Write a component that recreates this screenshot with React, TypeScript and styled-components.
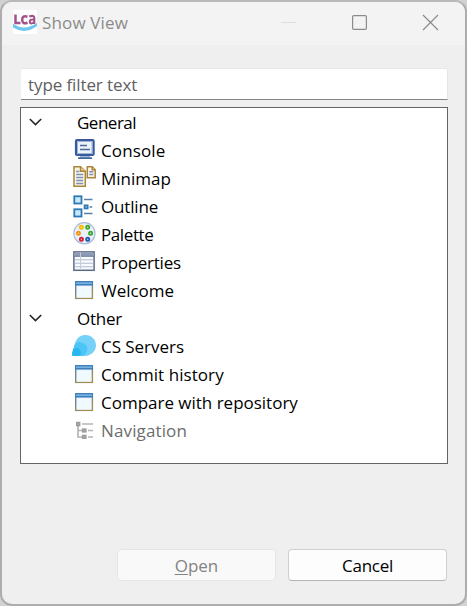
import React from "react";
import styled, { createGlobalStyle } from "styled-components";

const GlobalStyle = createGlobalStyle`
  *, *::before, *::after { box-sizing: border-box; }
  body { margin: 0; background: #d2d2d2; overflow: hidden; }
`;

const Dialog = styled.div`
  width: 467px;
  height: 606px;
  display: flex;
  flex-direction: column;
  border: 2px solid #adadad;
  border-top-color: #b9b9b9;
  border-radius: 12px;
  background: #efefef;
  overflow: hidden;
  font-family: "Open Sans", "Noto Sans", sans-serif;
  font-size: 17px;
  color: #000;
`;

const TitleBar = styled.header`
  height: 43px;
  flex: none;
  display: flex;
  align-items: center;
  padding: 0 26px 3px 11px;
  background: #f3f3f3;
`;

const Title = styled.h1<{ $tracking: number }>`
  flex: 1;
  margin: 0 0 0 5px;
  padding-top: 2px;
  font-size: 17px;
  font-weight: 400;
  line-height: 24px;
  letter-spacing: ${(p) => p.$tracking}px;
  color: #8b8b8b;
`;

const Controls = styled.div`
  display: flex;
  gap: 54px;
`;

const Control = styled.svg`
  width: 17px;
  height: 17px;
  display: block;
`;

const Body = styled.main`
  flex: 1;
  display: flex;
  flex-direction: column;
  padding: 23px 17px 0 18px;
`;

const Filter = styled.input`
  height: 32px;
  flex: none;
  margin-left: 1px;
  padding: 0 7px;
  border: 0;
  border-bottom: 1px solid #858585;
  border-top: 1px solid #e8e8e8;
  border-right: 1px solid #e5e5e5;
  background: #fff;
  border-radius: 2px 2px 0 0;
  outline: none;
  font: inherit;
  letter-spacing: -0.1px;
  &::placeholder { color: #5f5f5f; opacity: 1; }
`;

const Tree = styled.div`
  height: 357px;
  flex: none;
  margin-top: 7px;
  border: 1px solid #646464;
  background: #fff;
`;

const Group = styled.div`
  height: 28px;
  display: grid;
  grid-template-columns: 48px 1fr;
  align-items: center;
  padding-left: 8px;
`;

const Chevron = styled.svg`
  width: 13px;
  height: 8px;
  display: block;
`;

const Item = styled.div<{ $muted?: boolean }>`
  height: 28px;
  display: flex;
  align-items: center;
  gap: 5px;
  padding-left: 51px;
  color: ${(p) => (p.$muted ? "#6d6d6d" : "#000")};
`;

const Label = styled.span<{ $tracking: number }>`
  padding-top: 2px;
  line-height: 26px;
  white-space: nowrap;
  letter-spacing: ${(p) => p.$tracking}px;
`;

const Icon = styled.svg`
  width: 24px;
  height: 24px;
  flex: none;
  display: block;
`;

const Actions = styled.footer`
  display: flex;
  justify-content: flex-end;
  gap: 12px;
  margin-top: 85px;
  padding-right: 1px;
`;

const Button = styled.button`
  width: 159px;
  height: 32px;
  padding: 0;
  border: 1px solid #d0d0d0;
  border-bottom-color: #b5b5b5;
  border-radius: 4px;
  background: #fdfdfd;
  color: #000;
  font: inherit;
  letter-spacing: -0.3px;
  &:disabled {
    border-color: #e5e5e5;
    background: #f9f9f9;
    color: #838383;
    letter-spacing: 0;
  }
`;

const Mnemonic = styled.span`
  text-decoration: underline;
  text-decoration-thickness: 1px;
  text-underline-offset: 2px;
`;

const LogoIcon = () => (
  <Icon viewBox="0 0 24 24">
    <rect width="24" height="24" fill="#fff" />
    <g fill="none" stroke="#a2528b" strokeWidth="2.5">
      <path d="M2.5 4.5V13H7.5" />
      <path d="M14.5 6.8Q9.2 5 9.2 9.8T14.5 12.8" />
      <path d="M16.3 6.5Q21.3 4.8 21.3 8V14M21.3 9.5Q16.3 9 16.8 12T21.3 12" strokeWidth="2.1" />
    </g>
    <path d="M0 13.8Q11 21.5 24 13V16Q12 25 0 17.5Z" fill="#6fc6ee" />
  </Icon>
);

const ConsoleIcon = () => (
  <Icon viewBox="0 0 24 24">
    <rect x="4" y="2" width="17.6" height="15" rx="1" fill="#f1f5fb" stroke="#365a9c" strokeWidth="2.2" />
    <rect x="5.6" y="3.6" width="14.4" height="11.8" fill="#edf3fb" stroke="#8ba6d0" strokeWidth=".8" />
    <path d="M8 7.5h7M8 11.5h10" stroke="#4a699c" strokeWidth="1.3" />
    <path d="M8 18.2h10v1.3H8z" fill="#7f9cc9" />
    <rect x="6" y="19.2" width="14" height="1.8" rx=".5" fill="#41659f" />
  </Icon>
);

const MinimapIcon = () => (
  <Icon viewBox="0 0 24 24">
    <g fill="#fbf6e4" stroke="#a9853c" strokeWidth="1.5">
      <path d="M2 .8h6.5l4.8 4.5v15H2z" />
      <path d="M15.3.8h5l2.9 2.9v8.1h-7.9z" />
      <path d="M8.5 .8v4.5h4.8M20.2.8v3h3" fill="#ead49b" />
    </g>
    <path d="M4.2 5.5h3M4.2 8.5h7M4.2 11.5h7M4.2 14.5h7M4.2 17.5h7M17.3 5.8h4M17.3 8.6h4" stroke="#7b8fbc" strokeWidth="1.5" />
  </Icon>
);

const OutlineIcon = () => (
  <Icon viewBox="0 0 24 24">
    <g fill="#c5eafb" stroke="#2d77b5" strokeWidth="1.8">
      <rect x="2.3" y="2.3" width="7.2" height="7.2" />
      <rect x="2.3" y="15.3" width="7.2" height="7.2" />
      <rect x="12.6" y="11.4" width="3" height="3" />
    </g>
    <path d="M12 5.4h8.5M17.5 13h2.7M12 19.5h8.5" stroke="#5580a8" strokeWidth="1.5" />
  </Icon>
);

const dots: [number, number, string, string][] = [
  [9.4, 5.3, "#f8b900", "#fff1a0"],
  [15.7, 5.3, "#3da52b", "#d8f5c4"],
  [6.4, 11.3, "#f59413", "#ffdda0"],
  [18.6, 11.3, "#3da52b", "#d8f5c4"],
  [9.4, 17.3, "#d71c36", "#ffc7cb"],
  [15.7, 17.3, "#2558ae", "#bdd6ff"],
];

const PaletteIcon = () => (
  <Icon viewBox="0 0 24 24">
    <circle cx="12.4" cy="11.3" r="10.6" fill="#e9f2fb" stroke="#a9bcda" strokeWidth="1.2" />
    {dots.map(([x, y, ring, core], i) => (
      <circle key={i} cx={x} cy={y} r="1.6" fill={core} stroke={ring} strokeWidth="1.8" />
    ))}
  </Icon>
);

const PropertiesIcon = () => (
  <Icon viewBox="0 0 24 24">
    <rect x="1.9" y="1.9" width="20.2" height="18.4" fill="#f8faff" stroke="#5c6a88" strokeWidth="1.5" />
    <path d="M2.5 2.5h19v3.5h-19z" fill="#8c9bb8" />
    <path d="M2 6.3h20" stroke="#66779a" strokeWidth="1" />
    <path d="M2.5 9.7h19M2.5 13.2h19M2.5 16.7h19" stroke="#b3bccb" strokeWidth="1.1" />
    <path d="M8.5 2.5V20" stroke="#c6cdd9" strokeWidth="1" />
  </Icon>
);

const WindowIcon = () => (
  <Icon viewBox="0 0 24 24">
    <defs>
      <linearGradient id="frame" x1="0" y1="0" x2="0.6" y2="1">
        <stop offset="0" stopColor="#4d83ac" />
        <stop offset="1" stopColor="#a68f52" />
      </linearGradient>
    </defs>
    <rect x="3.7" y="4" width="16.7" height="16.4" fill="#edf7ff" stroke="url(#frame)" strokeWidth="1.4" />
    <path d="M3 3h18v4.6H3z" fill="#3e80bc" />
    <path d="M4 4.4h16v1.5H4z" fill="#7fb5e3" />
    <path d="M5 8.7h14v10.8H5z" fill="#f0f9ff" />
  </Icon>
);

const ServersIcon = () => (
  <Icon viewBox="0 0 24 24">
    <path d="M13.5 1C19.5 1 24 5.7 24 11.4S19 21.6 13.5 22H1.5Q-.3 22 .2 19C1.8 15 2.8 11 3.4 8 5.2 3.5 9 1 13.5 1Z" fill="#75d1f7" />
    <path d="M2.8 10Q6 7 10.4 8.7C17 11 16.7 18 12 21Q10.8 22 8 22H1.5Q-.3 22 .2 19Z" fill="#4cc4f5" />
    <path d="M1.3 15Q7 12.5 8.5 17T6 22H1.5Q-.3 22 .2 19Z" fill="#27b7ef" />
  </Icon>
);

const NavigationIcon = () => (
  <Icon viewBox="0 0 24 24">
    <path d="M6 6v13h6M6 12.5h6M10 6h11M16 12.5h5M16 19h5" fill="none" stroke="#b5b5b5" strokeWidth="1.7" />
    <g fill="#aaa" stroke="#999" strokeWidth="1.2">
      <rect x="4.6" y="4.4" width="3.2" height="3.2" />
      <rect x="10.5" y="11" width="3.5" height="3" />
      <rect x="10.5" y="17.3" width="3.5" height="3" />
    </g>
  </Icon>
);

type View = { name: string; icon: React.FC; tracking: number; muted?: boolean };

const groups: { name: string; tracking: number; views: View[] }[] = [
  {
    name: "General",
    tracking: -0.5,
    views: [
      { name: "Console", icon: ConsoleIcon, tracking: 0.12 },
      { name: "Minimap", icon: MinimapIcon, tracking: 0 },
      { name: "Outline", icon: OutlineIcon, tracking: -0.18 },
      { name: "Palette", icon: PaletteIcon, tracking: -0.4 },
      { name: "Properties", icon: PropertiesIcon, tracking: -0.25 },
      { name: "Welcome", icon: WindowIcon, tracking: -0.03 },
    ],
  },
  {
    name: "Other",
    tracking: -0.25,
    views: [
      { name: "CS Servers", icon: ServersIcon, tracking: -0.04 },
      { name: "Commit history", icon: WindowIcon, tracking: 0.07 },
      { name: "Compare with repository", icon: WindowIcon, tracking: -0.01 },
      { name: "Navigation", icon: NavigationIcon, tracking: 0.13, muted: true },
    ],
  },
];

export default function App() {
  return (
    <>
      <GlobalStyle />
      <Dialog>
        <TitleBar>
          <LogoIcon />
          <Title $tracking={0.15}>Show View</Title>
          <Controls>
            <Control viewBox="0 0 17 17">
              <path d="M1 8.5h15" stroke="#dedede" />
            </Control>
            <Control viewBox="0 0 17 17">
              <rect x="1.6" y="1.6" width="13.8" height="13.8" rx="1.2" fill="none" stroke="#8b8b8b" strokeWidth="1.2" />
            </Control>
            <Control viewBox="0 0 17 17">
              <path d="M1 1l15 15M16 1L1 16" stroke="#8b8b8b" strokeWidth="1.2" />
            </Control>
          </Controls>
        </TitleBar>
        <Body>
          <Filter placeholder="type filter text" />
          <Tree>
            {groups.map((group) => (
              <React.Fragment key={group.name}>
                <Group>
                  <Chevron viewBox="0 0 13 8">
                    <path d="M.8 1l5.7 5.6L12.2 1" fill="none" stroke="#262626" strokeWidth="1.6" />
                  </Chevron>
                  <Label $tracking={group.tracking}>{group.name}</Label>
                </Group>
                {group.views.map(({ name, icon: Glyph, tracking, muted }) => (
                  <Item key={name} $muted={muted}>
                    <Glyph />
                    <Label $tracking={tracking}>{name}</Label>
                  </Item>
                ))}
              </React.Fragment>
            ))}
          </Tree>
          <Actions>
            <Button disabled>
              <Mnemonic>O</Mnemonic>pen
            </Button>
            <Button>Cancel</Button>
          </Actions>
        </Body>
      </Dialog>
    </>
  );
}
